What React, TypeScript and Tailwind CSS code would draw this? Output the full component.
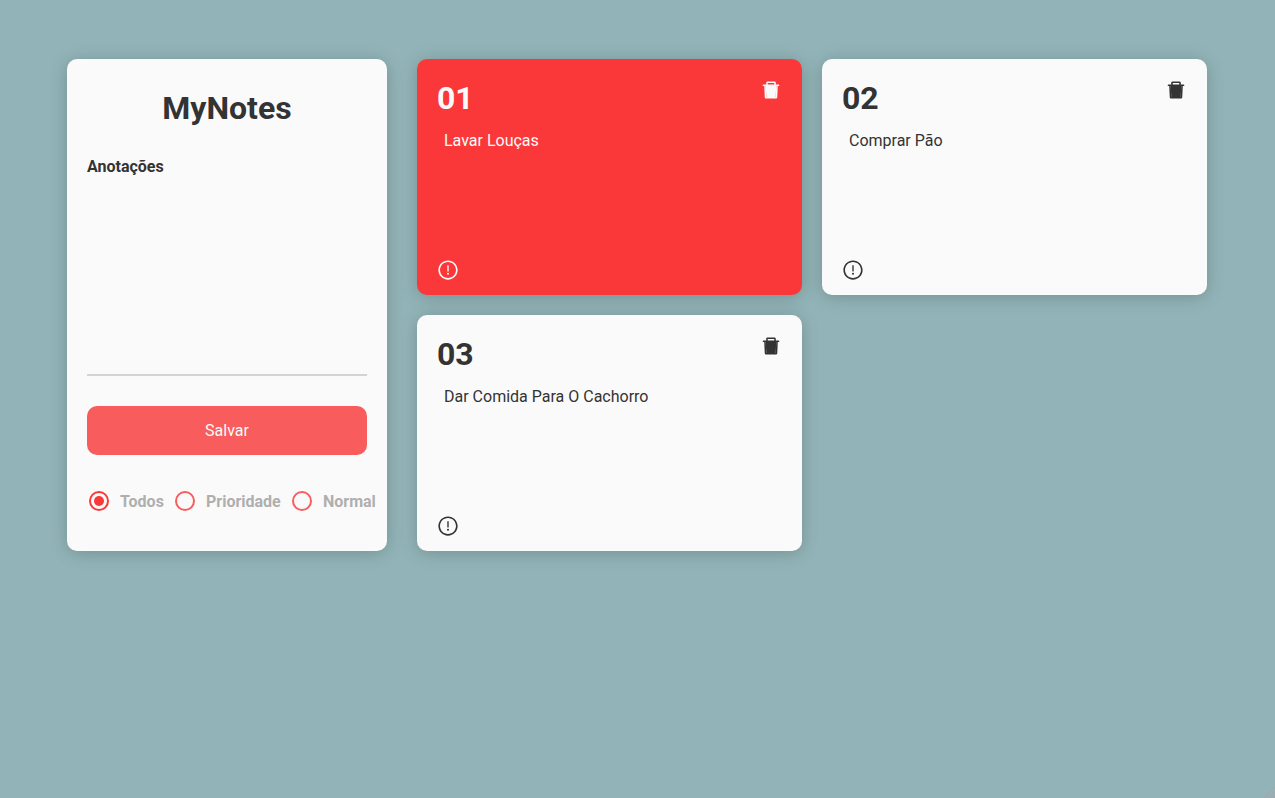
import { useState } from "react";
import { AiTwotoneDelete, AiOutlineExclamationCircle } from "react-icons/ai";

type Note = { id: number; title: string; text: string; priority: boolean };
type Filter = "Todos" | "Prioridade" | "Normal";

const initialNotes: Note[] = [
  { id: 1, title: "01", text: "Lavar Louças", priority: true },
  { id: 2, title: "02", text: "Comprar Pão", priority: false },
  { id: 3, title: "03", text: "Dar Comida Para O Cachorro", priority: false },
];

const filters: { name: Filter; width: string }[] = [
  { name: "Todos", width: "w-[86px]" },
  { name: "Prioridade", width: "w-[117px]" },
  { name: "Normal", width: "w-[90px]" },
];

function RadioMark({ checked }: { checked: boolean }) {
  return (
    <svg
      viewBox="0 0 24 24"
      className={`size-6 shrink-0 ${checked ? "text-[#fb3839]" : "text-[#f95d5e]"}`}
    >
      <circle cx="12" cy="12" r="9" fill="none" stroke="currentColor" strokeWidth="2" />
      {checked && <circle cx="12" cy="12" r="5" fill="currentColor" />}
    </svg>
  );
}

function NoteCard({ note, onDelete }: { note: Note; onDelete: () => void }) {
  return (
    <li
      className={`flex h-[236px] flex-col rounded-[10px] px-5 pt-5 pb-[14px] shadow-[0_2px_18px_rgba(0,0,0,0.2)] ${
        note.priority ? "bg-[#fb3839] text-[#fafafa]" : "bg-[#fafafa] text-[#333]"
      }`}
    >
      <div className="flex items-start justify-between">
        <strong className="text-[32px] leading-[38px] font-bold">{note.title}</strong>
        <button aria-label="Excluir" onClick={onDelete}>
          <AiTwotoneDelete size={22} className="[&_path]:fill-current" />
        </button>
      </div>
      <p className="mt-[14px] flex-1 pl-[7px] text-base leading-[19px]">{note.text}</p>
      <AiOutlineExclamationCircle size={22} />
    </li>
  );
}

export default function App() {
  const [notes, setNotes] = useState(initialNotes);
  const [filter, setFilter] = useState<Filter>("Todos");
  const [draft, setDraft] = useState("");

  const save = () => {
    if (!draft.trim()) return;
    const id = notes.reduce((max, n) => Math.max(max, n.id), 0) + 1;
    setNotes([...notes, { id, title: String(id).padStart(2, "0"), text: draft, priority: false }]);
    setDraft("");
  };

  const visible = notes.filter(
    (n) => filter === "Todos" || n.priority === (filter === "Prioridade"),
  );

  return (
    <div className="relative flex min-h-screen items-start gap-[30px] overflow-hidden bg-[#92b4b8] pt-[59px] pr-[68px] pl-[67px] font-['Roboto',sans-serif] text-[#333]">
      <aside className="flex h-[492px] w-[320px] shrink-0 flex-col rounded-[10px] bg-[#fafafa] px-5 pt-[30px] shadow-[0_2px_18px_rgba(0,0,0,0.2)]">
        <h1 className="text-center text-[32px] leading-[38px] font-bold">MyNotes</h1>
        <label htmlFor="note" className="mt-[30px] text-base leading-[19px] font-bold">
          Anotações
        </label>
        <textarea
          id="note"
          value={draft}
          onChange={(e) => setDraft(e.target.value)}
          className="h-[200px] w-full resize-none border-b-2 border-[#d3d3d3] bg-transparent outline-none"
        />
        <button
          onClick={save}
          className="mt-[30px] h-[49px] w-full shrink-0 rounded-[10px] bg-[#f85c5d] text-base text-[#fafafa]"
        >
          Salvar
        </button>
        <div className="mt-[33px] flex">
          {filters.map(({ name, width }) => (
            <button
              key={name}
              onClick={() => setFilter(name)}
              className={`flex shrink-0 items-center gap-[9px] text-base font-bold text-[#afafaf] ${width}`}
            >
              <RadioMark checked={filter === name} />
              <span className="pt-0.5 leading-6">{name}</span>
            </button>
          ))}
        </div>
      </aside>
      <ul className="grid flex-1 grid-cols-2 gap-5">
        {visible.map((note) => (
          <NoteCard
            key={note.id}
            note={note}
            onDelete={() => setNotes(notes.filter((n) => n.id !== note.id))}
          />
        ))}
      </ul>
      <svg viewBox="0 0 12 12" className="absolute right-0 bottom-0 size-3 text-[#a9a4aa]">
        <path d="M0 13 13 0M5 13l8-8M10 13l3-3" fill="none" stroke="currentColor" strokeWidth="1.2" />
      </svg>
    </div>
  );
}
